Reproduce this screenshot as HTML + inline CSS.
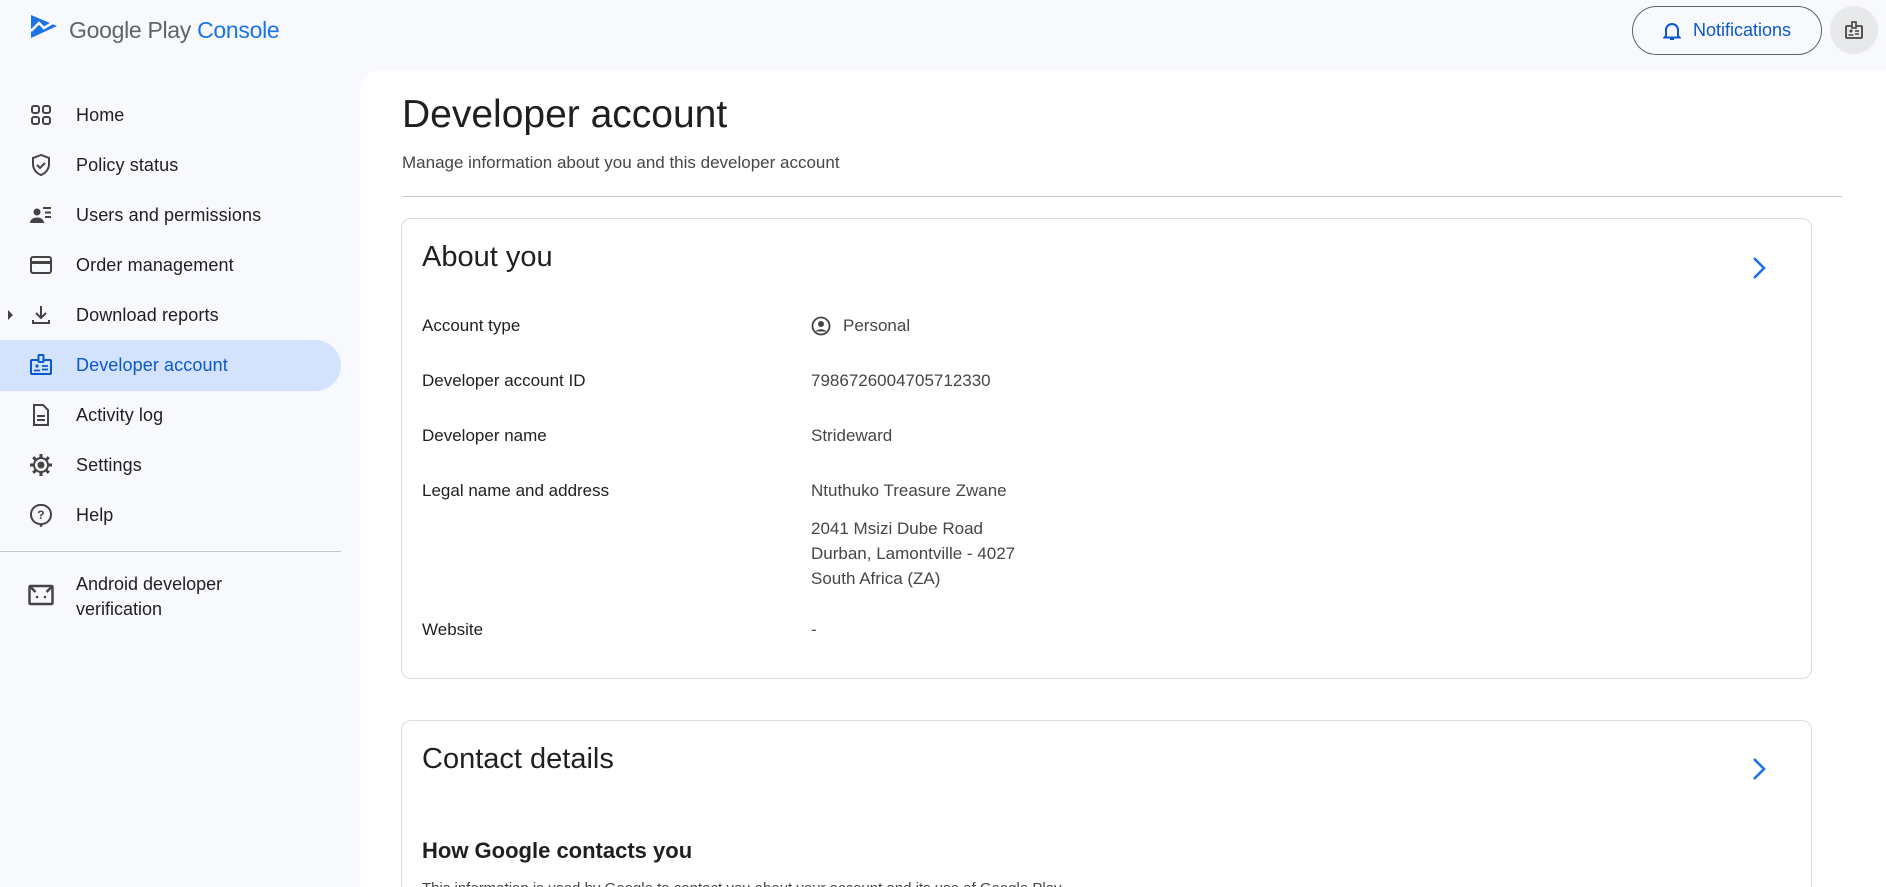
<!DOCTYPE html>
<html><head><meta charset="utf-8"><style>
*{box-sizing:border-box;margin:0;padding:0}
html,body{width:1886px;height:887px;overflow:hidden}
body{background:#f8f9fd;font-family:"Liberation Sans",Arial,sans-serif;color:#1f1f1f;position:relative}
.abs{position:absolute}
.nav{position:absolute;left:0;width:340px;height:50px;display:flex;align-items:center;font-size:18px;color:#1f1f1f;letter-spacing:.1px}
.nav svg{position:absolute;left:29px;width:24px;height:24px}
.nav span{position:absolute;left:76px}
.main{position:absolute;left:360px;top:70px;width:1526px;height:817px;background:#fff;border-top-left-radius:20px}
.card{position:absolute;left:401px;width:1411px;border:1px solid #dadce0;border-radius:10px;background:#fff}
.lbl{position:absolute;left:422px;font-size:17px;color:#1f1f1f}
.val{position:absolute;left:811px;font-size:17px;color:#444746}
</style></head><body>
<svg class="abs" style="left:29px;top:13px" width="30" height="26" viewBox="0 0 30 26"><path d="M2 2 L28 13 L2 25 Z" fill="#1a73e8"/><path d="M2 18 L10 10 L15 15 L25 9" stroke="#fff" stroke-width="2.5" fill="none"/></svg>
<div class="abs" style="left:69px;top:17px;font-size:23px;color:#5f6368;letter-spacing:-.3px">Google Play <span style="color:#1a73e8">Console</span></div>
<div class="abs" style="left:1632px;top:6px;width:190px;height:49px;border:1px solid #5f6368;border-radius:25px;display:flex;align-items:center;justify-content:center;gap:12px;color:#0b57d0;font-size:18px">
<svg width="18" height="20" viewBox="0 0 18 20"><path d="M3 15V9a6 6 0 0 1 12 0v6l1.5 1.5H1.5Z M7 18h4" stroke="#0b57d0" stroke-width="2" fill="none"/></svg>Notifications</div>
<div class="abs" style="left:1830px;top:6px;width:48px;height:48px;border-radius:50%;background:#e8e9eb"></div>
<svg class="abs" style="left:1844px;top:20px" width="20" height="20" viewBox="0 0 20 20"><rect x="2" y="6" width="16" height="12" rx="1" stroke="#444" stroke-width="1.8" fill="none"/><rect x="8" y="2" width="4" height="6" stroke="#444" stroke-width="1.6" fill="#e8e9eb"/><circle cx="7" cy="11" r="1.5" fill="#444"/><path d="M4.5 15h5M11 11h4M11 14h4" stroke="#444" stroke-width="1.5"/></svg>
<div class="nav" style="top:90px"><svg viewBox="0 0 24 24"><g stroke="#444" stroke-width="2" fill="none"><rect x="3" y="3" width="7" height="7" rx="2"/><rect x="14" y="3" width="7" height="7" rx="2"/><rect x="3" y="14" width="7" height="7" rx="2"/><rect x="14" y="14" width="7" height="7" rx="2"/></g></svg><span>Home</span></div>
<div class="nav" style="top:140px"><svg viewBox="0 0 24 24"><path d="M12 2 4 5v6c0 5 3.5 9.5 8 11 4.5-1.5 8-6 8-11V5Z M8 12l3 3 5-5" stroke="#444" stroke-width="2" fill="none"/></svg><span>Policy status</span></div>
<div class="nav" style="top:190px"><svg viewBox="0 0 24 24"><circle cx="8" cy="9" r="3.5" fill="#444"/><path d="M1 20c0-4 4-5.5 7-5.5s7 1.5 7 5.5Z" fill="#444"/><path d="M14 5h8M16 9.5h6M16 14h6" stroke="#444" stroke-width="2"/></svg><span>Users and permissions</span></div>
<div class="nav" style="top:240px"><svg viewBox="0 0 24 24"><rect x="2" y="4" width="20" height="16" rx="2" stroke="#444" stroke-width="2" fill="none"/><rect x="2" y="8" width="20" height="3" fill="#444"/></svg><span>Order management</span></div>
<div class="nav" style="top:290px"><div class="abs" style="left:8px;width:0;height:0;border-left:5px solid #444;border-top:5px solid transparent;border-bottom:5px solid transparent"></div><svg viewBox="0 0 24 24"><path d="M12 3v12M7 10l5 5 5-5M4 17v3h16v-3" stroke="#444" stroke-width="2" fill="none"/></svg><span>Download reports</span></div>
<div class="abs" style="left:0;top:340px;width:341px;height:51px;background:#d3e3fd;border-radius:0 26px 26px 0"></div>
<div class="nav" style="top:340px;color:#0b57d0"><svg viewBox="0 0 24 24"><rect x="2" y="7" width="20" height="14" rx="1" stroke="#0b57d0" stroke-width="2" fill="none"/><rect x="9.5" y="2" width="5" height="7" rx="1" stroke="#0b57d0" stroke-width="2" fill="#d3e3fd"/><circle cx="8" cy="13" r="1.6" fill="#0b57d0"/><path d="M5 17.5h6M13 13h6M13 16.5h6" stroke="#0b57d0" stroke-width="1.8"/></svg><span>Developer account</span></div>
<div class="nav" style="top:390px"><svg viewBox="0 0 24 24"><path d="M5 2h9l5 5v15H5Z M8 13h8M8 17h8" stroke="#444" stroke-width="2" fill="none"/></svg><span>Activity log</span></div>
<div class="nav" style="top:440px"><svg viewBox="0 0 24 24"><circle cx="12" cy="12" r="3.5" fill="#444"/><circle cx="12" cy="12" r="7" stroke="#444" stroke-width="2" fill="none"/><path d="M12 1v4M12 19v4M1 12h4M19 12h4M4.2 4.2l2.8 2.8M17 17l2.8 2.8M4.2 19.8 7 17M17 7l2.8-2.8" stroke="#444" stroke-width="3"/></svg><span>Settings</span></div>
<div class="nav" style="top:490px"><svg viewBox="0 0 24 24"><path d="M12 2a9.5 9.5 0 0 0-1 19l1 2 1-2a9.5 9.5 0 0 0-1-19Z" stroke="#444" stroke-width="2" fill="none"/><text x="12" y="16" font-size="12" font-weight="bold" text-anchor="middle" fill="#444" font-family="Liberation Sans">?</text></svg><span>Help</span></div>
<div class="abs" style="left:0;top:551px;width:341px;height:1px;background:#c4c7c5"></div>
<svg class="abs" style="left:28px;top:583px" width="26" height="24" viewBox="0 0 26 24"><rect x="1.5" y="3" width="23" height="18" rx="1" stroke="#444" stroke-width="2.5" fill="none"/><path d="M1.5 3l6 6M24.5 3l-6 6" stroke="#444" stroke-width="2.5"/><circle cx="9" cy="14" r="1.3" fill="#444"/><circle cx="17" cy="14" r="1.3" fill="#444"/></svg>
<div class="abs" style="left:76px;top:572px;font-size:18px;line-height:25px">Android developer<br>verification</div>
<div class="main"></div>
<div class="abs" style="left:402px;top:93px;font-size:39px;color:#1f1f1f">Developer account</div>
<div class="abs" style="left:402px;top:153px;font-size:17px;color:#444746">Manage information about you and this developer account</div>
<div class="abs" style="left:402px;top:196px;width:1440px;height:1px;background:#c4c7c5"></div>
<div class="card" style="top:218px;height:461px"></div>
<div class="abs" style="left:422px;top:241px;font-size:29px">About you</div>
<svg class="abs" style="left:1751px;top:255px" width="16" height="26" viewBox="0 0 16 26"><path d="M3 3l10 10-10 10" stroke="#1a73e8" stroke-width="2.6" fill="none"/></svg>
<div class="lbl" style="top:316px">Account type</div>
<svg class="abs" style="left:811px;top:316px" width="20" height="20" viewBox="0 0 20 20"><circle cx="10" cy="10" r="8.5" stroke="#444" stroke-width="1.8" fill="none"/><circle cx="10" cy="8" r="3" fill="#444"/><path d="M4.5 15.5c2-3 9-3 11 0" fill="#444"/></svg>
<div class="val" style="left:843px;top:316px">Personal</div>
<div class="lbl" style="top:371px">Developer account ID</div><div class="val" style="top:371px">7986726004705712330</div>
<div class="lbl" style="top:426px">Developer name</div><div class="val" style="top:426px">Strideward</div>
<div class="lbl" style="top:481px">Legal name and address</div><div class="val" style="top:481px">Ntuthuko Treasure Zwane</div>
<div class="val" style="top:516px;line-height:25px">2041 Msizi Dube Road<br>Durban, Lamontville - 4027<br>South Africa (ZA)</div>
<div class="lbl" style="top:620px">Website</div><div class="val" style="top:620px">-</div>
<div class="card" style="top:720px;height:180px;border-bottom:none;border-bottom-left-radius:0;border-bottom-right-radius:0;max-height:167px"></div>
<div class="abs" style="left:422px;top:743px;font-size:29px">Contact details</div>
<svg class="abs" style="left:1751px;top:756px" width="16" height="26" viewBox="0 0 16 26"><path d="M3 3l10 10-10 10" stroke="#1a73e8" stroke-width="2.6" fill="none"/></svg>
<div class="abs" style="left:422px;top:838px;font-size:22px;font-weight:bold;color:#1f1f1f">How Google contacts you</div>
<div class="abs" style="left:422px;top:880px;height:7px;overflow:hidden;font-size:15px;color:#444746;white-space:nowrap">This information is used by Google to contact you about your account and its use of Google Play</div>
</body></html>
